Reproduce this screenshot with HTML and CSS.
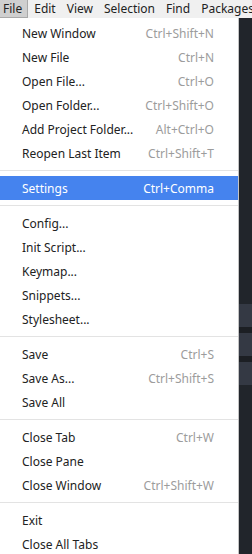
FILE: index.html
```html
<!DOCTYPE html>
<html>
<head>
    <title>File Menu</title>
    <link rel="stylesheet" href="styles.css">
</head>
<body>

    <div class="menubar">
        <span class="menubar-item active">File</span>
        <span class="menubar-item">Edit</span>
        <span class="menubar-item">View</span>
        <span class="menubar-item">Selection</span>
        <span class="menubar-item">Find</span>
        <span class="menubar-item">Packages</span>
    </div>

    <div class="main">
        <div class="menu">
            <div class="item"><span>New Window</span><span class="key">Ctrl+Shift+N</span></div>
            <div class="item"><span>New File</span><span class="key">Ctrl+N</span></div>
            <div class="item"><span>Open File...</span><span class="key">Ctrl+O</span></div>
            <div class="item"><span>Open Folder...</span><span class="key">Ctrl+Shift+O</span></div>
            <div class="item"><span>Add Project Folder...</span><span class="key">Alt+Ctrl+O</span></div>
            <div class="item"><span>Reopen Last Item</span><span class="key">Ctrl+Shift+T</span></div>
            <div class="separator"></div>
            <div class="item selected"><span>Settings</span><span class="key">Ctrl+Comma</span></div>
            <div class="separator"></div>
            <div class="item"><span>Config...</span></div>
            <div class="item"><span>Init Script...</span></div>
            <div class="item"><span>Keymap...</span></div>
            <div class="item"><span>Snippets...</span></div>
            <div class="item"><span>Stylesheet...</span></div>
            <div class="separator"></div>
            <div class="item"><span>Save</span><span class="key">Ctrl+S</span></div>
            <div class="item"><span>Save As...</span><span class="key">Ctrl+Shift+S</span></div>
            <div class="item"><span>Save All</span></div>
            <div class="separator"></div>
            <div class="item"><span>Close Tab</span><span class="key">Ctrl+W</span></div>
            <div class="item"><span>Close Pane</span></div>
            <div class="item"><span>Close Window</span><span class="key">Ctrl+Shift+W</span></div>
            <div class="separator"></div>
            <div class="item"><span>Exit</span></div>
            <div class="item"><span>Close All Tabs</span></div>
        </div>

        <div class="editor">
            <div class="editor-top"></div>
            <div class="band"></div>
            <div class="band-gap"></div>
            <div class="band"></div>
            <div class="band-gap"></div>
            <div class="band"></div>
        </div>
    </div>

</body>
</html>
```

FILE: styles.css
```css
body {
    margin: 0;
    font-family: "Noto Sans", "Liberation Sans", sans-serif;
    font-size: 12px;
    color: #222;
    overflow: hidden;
    background: #fff;
}

.menubar {
    display: flex;
    height: 18px;
    background: #f0f0f0;
    white-space: nowrap;
}
.menubar-item {
    padding: 0 5px 0 3px;
    line-height: 17px;
    margin-right: 3px;
}
.menubar-item.active {
    background: #cfcfcf;
    border: 1px solid #a9a9a9;
    border-top: none;
    border-left: none;
    line-height: 17px;
    height: 17px;
}

.main {
    display: flex;
    height: 536px;
}

.menu {
    width: 239px;
    padding-top: 3px;
    border-right: 1px solid #c4c4c4;
    background: #fff;
    box-sizing: border-box;
    flex-shrink: 0;
}
.item {
    display: flex;
    justify-content: space-between;
    align-items: center;
    height: 24px;
    padding: 0 24px 0 22px;
    white-space: nowrap;
}
.item .key {
    color: #9c9c9c;
}
.item.selected {
    background: #4583ee;
    color: #fff;
}
.item.selected .key {
    color: #fff;
}
.separator {
    height: 1px;
    margin: 5px 0;
    background: #e3e3e3;
}

.editor {
    flex: 1;
    display: flex;
    flex-direction: column;
    background: #21252b;
}
.editor-top {
    height: 286px;
}
.band {
    height: 23px;
    background: #343944;
}
.band-gap {
    height: 6px;
    background: #1c1f24;
}
```
